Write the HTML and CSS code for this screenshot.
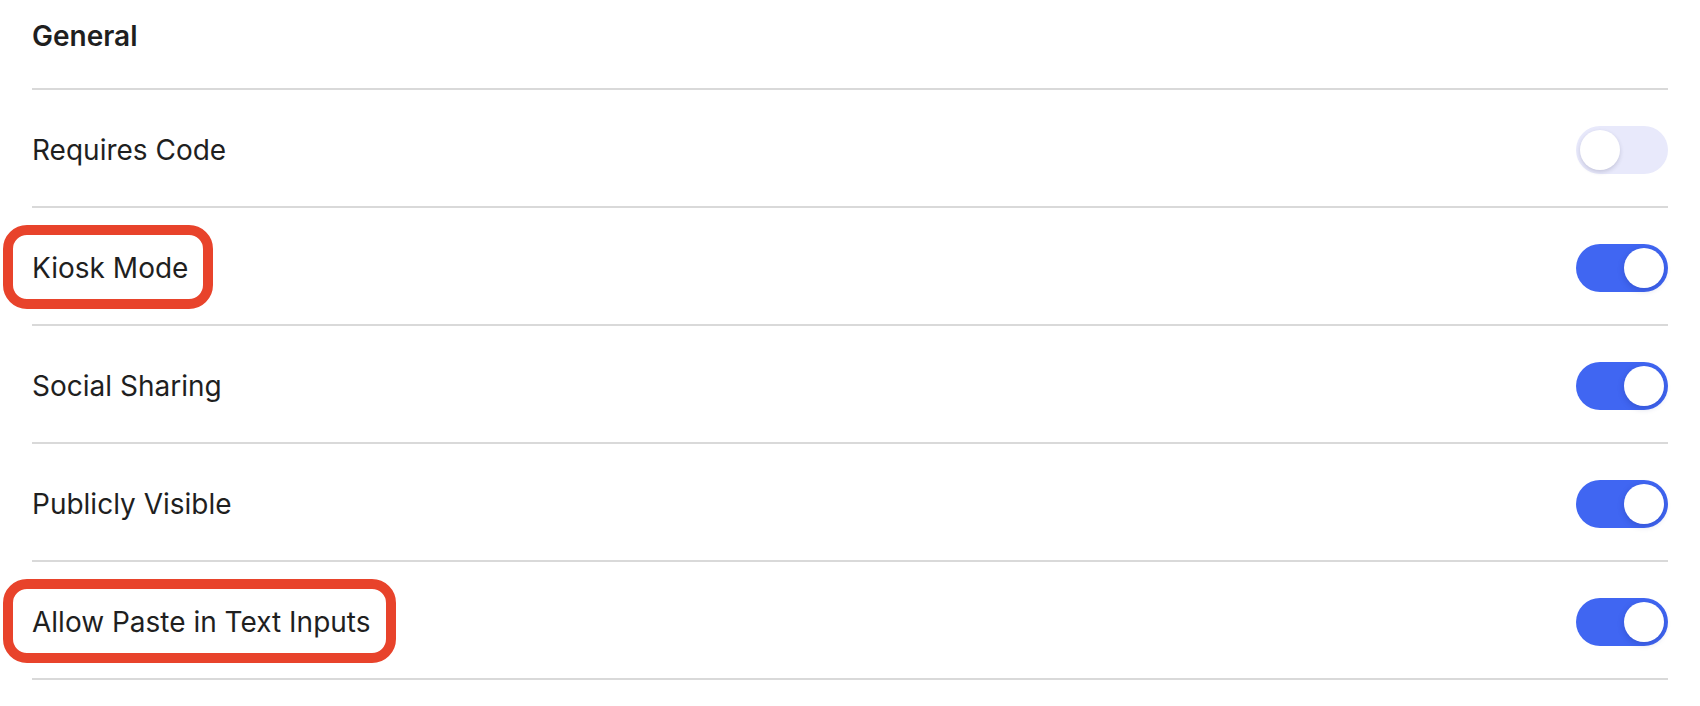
FILE: index.html
```html
<!DOCTYPE html>
<html lang="en">
<head>
<meta charset="utf-8">
<title>General settings</title>
<link rel="stylesheet" href="styles.css">
</head>
<body>
<div class="panel">
  <div class="section-title">General</div>
  <div class="row">
    <span class="label">Requires Code</span>
    <span class="toggle"><span class="knob"></span></span>
  </div>
  <div class="row">
    <span class="label">Kiosk Mode</span>
    <span class="toggle on"><span class="knob"></span></span>
  </div>
  <div class="row">
    <span class="label">Social Sharing</span>
    <span class="toggle on"><span class="knob"></span></span>
  </div>
  <div class="row">
    <span class="label">Publicly Visible</span>
    <span class="toggle on"><span class="knob"></span></span>
  </div>
  <div class="row">
    <span class="label">Allow Paste in Text Inputs</span>
    <span class="toggle on"><span class="knob"></span></span>
  </div>
  <div class="highlight hl-kiosk"></div>
  <div class="highlight hl-paste"></div>
</div>
</body>
</html>
```
FILE: styles.css
```css
html, body {
  margin: 0;
  padding: 0;
  background: #ffffff;
}
body {
  font-family: Inter, "Noto Sans", "Liberation Sans", sans-serif;
  color: #1f1f1f;
}
.panel {
  position: relative;
  padding: 0 32px;
}
.section-title {
  font-size: 28px;
  font-weight: 600;
  line-height: 34px;
  padding-top: 19px;
  height: 69px;
  border-bottom: 2px solid #d9d9d9;
}
.row {
  display: flex;
  align-items: center;
  justify-content: space-between;
  height: 116px;
  padding-top: 3px;
  box-sizing: border-box;
  height: 118px;
  border-bottom: 2px solid #d9d9d9;
}
.label {
  font-size: 28px;
  line-height: 34px;
  font-weight: 400;
}
.toggle {
  display: flex;
  align-items: center;
  width: 92px;
  height: 48px;
  border-radius: 24px;
  background: #e8e9fb;
  padding: 4px;
  box-sizing: border-box;
}
.toggle .knob {
  width: 40px;
  height: 40px;
  border-radius: 50%;
  background: #ffffff;
  box-shadow: 0 2px 4px rgba(40, 40, 80, 0.18);
}
.toggle.on {
  background: #4066f2;
  justify-content: flex-end;
}
.toggle.on .knob {
  box-shadow: 0 2px 6px rgba(20, 30, 120, 0.25);
}
.highlight {
  position: absolute;
  border: 10px solid #e8432b;
  border-radius: 24px;
  box-sizing: border-box;
  left: 3px;
}
.hl-kiosk {
  top: 225px;
  width: 210px;
  height: 84px;
}
.hl-paste {
  top: 579px;
  width: 393px;
  height: 84px;
}
```
